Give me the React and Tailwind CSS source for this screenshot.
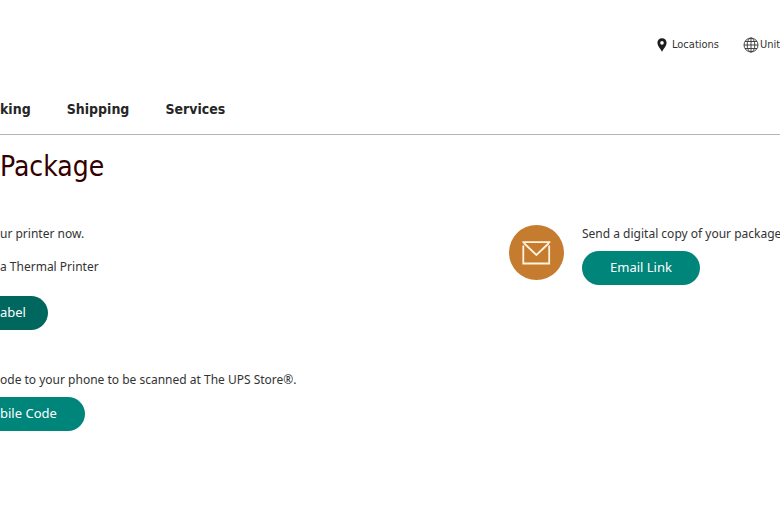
const navItems = ['king', 'Shipping', 'Services'];

function PinIcon() {
  return (
    <svg viewBox="0 0 10 14" className="h-[14px] w-[10px] shrink-0" aria-hidden="true">
      <path
        fillRule="evenodd"
        fill="#1f1d1c"
        d="M5 0.3C2.3 0.3 0.4 2.3 0.4 4.8C0.4 7.8 3.2 10.6 5 13.7C6.8 10.6 9.6 7.8 9.6 4.8C9.6 2.3 7.7 0.3 5 0.3ZM5 3.1A1.8 1.8 0 1 1 5 6.7A1.8 1.8 0 1 1 5 3.1Z"
      />
    </svg>
  );
}

function GlobeIcon() {
  return (
    <svg
      viewBox="0 0 16 16"
      className="h-4 w-4 shrink-0"
      fill="none"
      stroke="#333"
      strokeWidth="0.9"
      aria-hidden="true"
    >
      <circle cx="8" cy="8" r="7" />
      <ellipse cx="8" cy="8" rx="3.8" ry="7" />
      <path d="M8 1V15M1 8H15M2 4.5H14M2 11.5H14" />
    </svg>
  );
}

function MailIcon() {
  return (
    <svg
      viewBox="0 0 55 55"
      className="mt-px h-[55px] w-[55px] shrink-0"
      fill="none"
      stroke="#fff3df"
      strokeWidth="1.8"
      aria-hidden="true"
    >
      <circle cx="27.5" cy="27.5" r="27.5" fill="#c67c2f" stroke="none" />
      <path d="M14.3 20.5V38.5H40.2V20.5M13.4 17.2H41.3M14.8 18L27.4 30L40 18" />
    </svg>
  );
}

export default function App() {
  return (
    <div className="overflow-hidden bg-white font-['Noto_Sans',sans-serif] text-[#333]">
      <header className="border-b border-[#b5b5b5] font-['DejaVu_Sans_Condensed',sans-serif]">
        <div className="flex justify-end pt-[37px]">
          <div className="flex w-[123px] whitespace-nowrap text-[11px] leading-4">
            <a href="#locations" className="flex w-[86px] shrink-0 items-center gap-[5px]">
              <PinIcon />
              Locations
            </a>
            <a href="#country" className="flex shrink-0 items-center gap-px">
              <GlobeIcon />
              Unit
            </a>
          </div>
        </div>
        <nav className="flex gap-9 pt-[46px] pb-[15px] text-sm font-bold text-[#262626]">
          {navItems.map((item) => (
            <a key={item} href={'#' + item.toLowerCase()}>
              {item}
            </a>
          ))}
        </nav>
      </header>

      <main>
        <h1 className="pt-3 font-['DejaVu_Sans_Condensed',sans-serif] text-[28px] leading-10 text-[#330000]">
          Package
        </h1>

        <div className="flex justify-between pt-[37px]">
          {/* Print and mobile code options */}
          <div className="flex flex-col items-start">
            <p className="text-xs leading-5">ur printer now.</p>
            <p className="pt-[13px] text-xs leading-5">a Thermal Printer</p>
            <button className="mt-[19px] h-[34px] rounded-r-full bg-[#00675f] pr-[22px] text-[13px] text-white">
              abel
            </button>
            <p className="pt-10 text-xs leading-5">
              ode to your phone to be scanned at The UPS Store®.
            </p>
            <button className="mt-[7px] h-[34px] rounded-r-full bg-[#00857a] pr-7 text-[13px] text-white">
              bile Code
            </button>
          </div>

          {/* Email option */}
          <div className="flex w-[271px] items-start gap-[18px]">
            <MailIcon />
            <div>
              <p className="whitespace-nowrap text-xs leading-5">
                Send a digital copy of your package
              </p>
              <button className="mt-[7px] h-[34px] rounded-full bg-[#00857a] px-7 text-[13px] text-white">
                Email Link
              </button>
            </div>
          </div>
        </div>
      </main>
    </div>
  );
}
